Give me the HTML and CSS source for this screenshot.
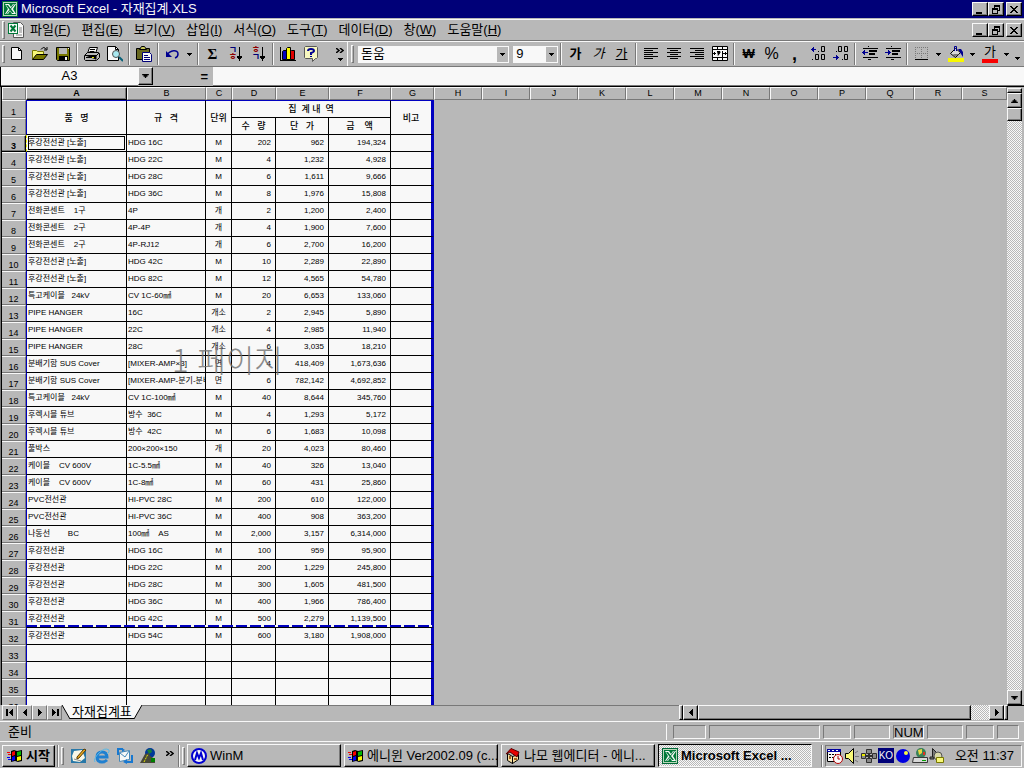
FILE: index.html
```html
<!DOCTYPE html>
<html lang="ko">
<head>
<meta charset="utf-8">
<title>Microsoft Excel - 자재집계.XLS</title>
<link rel="stylesheet" href="styles.css">
</head>
<body>
<svg class="defs" aria-hidden="true">
  <symbol id="xl" viewBox="0 0 16 16"><path fill="#006838" d="M0 0h16v16H0z"/><path fill="#b8d8b8" d="M1 1h14v14H1z"/><path fill="#007838" d="M2 2h12v12H2z"/><path fill="#f8f8f8" d="M3 3h4l2 3 2-3h3l-3 5 3 5h-4l-2-3-2 3H3l3-5z"/><path fill="#007838" d="M4 4h2l6 8h-2zM12 3h1l-8 10H4z"/></symbol>
  <symbol id="down" viewBox="0 0 5 3"><path d="M0 0h5v1H0zM1 1h3v1H1zM2 2h1v1H2z"/></symbol>
  <symbol id="left" viewBox="0 0 4 7"><path d="M3 0h1v7H3zM2 1h1v5H2zM1 2h1v3H1zM0 3h1v1H0z"/></symbol>
  <symbol id="right" viewBox="0 0 4 7"><path d="M0 0h1v7H0zM1 1h1v5H1zM2 2h1v3H2zM3 3h1v1H3z"/></symbol>
  <symbol id="min" viewBox="0 0 10 9"><path d="M1 7h6v2H1z"/></symbol>
  <symbol id="restore" viewBox="0 0 10 9"><path fill-rule="evenodd" d="M3 0h6v6H7V5h1V2H4v1H3zM1 3h6v6H1zM2 5v3h4V5z"/></symbol>
  <symbol id="close" viewBox="0 0 10 9"><path d="M1 1h2v1h1v1h2V2h1V1h2v1H8v1H7v1H6v1h1v1h1v1h1v1H7V7H6V6H4v1H3v1H1V7h1V6h1V5h1V4H3V3H2V2H1z"/></symbol>
  <symbol id="more" viewBox="0 0 8 5"><path fill="none" stroke="#000" stroke-width="1.500" d="M0 0l3 2.500L0 5M4 0l3 2.500L4 5"/></symbol>
  <symbol id="flag" viewBox="0 0 16 14"><path d="M4 2l3-1 3 1 5-1v11l-4 1-3-1-4 1z"/><path fill="#f80000" d="M5 3l3-1v4L5 7zM0 3h3v1H0zM1 5h3v1H1z"/><path fill="#00b800" d="M10 3l4-1v4l-4 1z"/><path fill="#0000f8" d="M5 8l3-1v4l-3 1zM0 8h3v1H0zM1 10h3v1H1z"/><path fill="#f8f800" d="M10 8l4-1v4l-4 1z"/></symbol>
</svg>

<header class="titlebar">
  <svg class="i16"><use href="#xl"/></svg>
  <h1 class="title">Microsoft Excel - 자재집계.XLS</h1>
  <div class="winbtns">
    <button class="wb" aria-label="최소화"><svg><use href="#min"/></svg></button>
    <button class="wb" aria-label="복원"><svg><use href="#restore"/></svg></button>
    <button class="wb wb-close" aria-label="닫기"><svg><use href="#close"/></svg></button>
  </div>
</header>

<nav class="menubar">
  <span class="grip"></span>
  <svg class="i16" viewBox="0 0 16 16"><path fill="#f8f8f8" stroke="#585858" d="M5.500 .5h7l3 3v12h-10z"/><path stroke="#888" d="M11 6h3M11 8h3M11 10h3M8 13h6"/><path fill="#007838" d="M0 1h10v11H0z"/><path fill="#f8f8f8" d="M1 2h8v9H1z"/><path stroke="#007838" stroke-width="2" d="M2.500 3.500l5 6M7.500 3.500l-5 6"/></svg>
  <div class="menus">
    <button>파일(<u>F</u>)</button><button>편집(<u>E</u>)</button><button>보기(<u>V</u>)</button><button>삽입(<u>I</u>)</button><button>서식(<u>O</u>)</button><button>도구(<u>T</u>)</button><button>데이터(<u>D</u>)</button><button>창(<u>W</u>)</button><button>도움말(<u>H</u>)</button>
  </div>
  <div class="winbtns">
    <button class="wb" aria-label="창 최소화"><svg><use href="#min"/></svg></button>
    <button class="wb" aria-label="창 복원"><svg><use href="#restore"/></svg></button>
    <button class="wb wb-close" aria-label="창 닫기"><svg><use href="#close"/></svg></button>
  </div>
</nav>

<div class="toolbars">
  <div class="toolbar">
    <span class="grip"></span>
    <button class="tb" aria-label="새로 만들기"><svg class="i16" viewBox="0 0 16 16"><path fill="#f8f8f8" stroke="#000" d="M2.500 1.500h7l3 3v9h-10z"/><path fill="none" stroke="#000" d="M9.500 1.500v3h3"/></svg></button>
    <button class="tb" aria-label="열기"><svg class="i16" viewBox="0 0 16 16"><path fill="#f8f878" stroke="#787800" d="M.5 13.500v-9h4l1 1h6v3"/><path fill="#787800" stroke="#000" d="M.5 13.500l4-5h11l-4 5z"/><path fill="none" stroke="#000" d="M9 3.500q3-4 5 0M15 1v3h-3"/></svg></button>
    <button class="tb" aria-label="저장"><svg class="i16" viewBox="0 0 16 16"><path fill="#787800" stroke="#000" d="M1.500 1.500h13v13h-12l-1-1z"/><path fill="#b8b8b8" d="M4 2h8v6H4z"/><path d="M4 10h9v4H4z"/><path fill="#f8f8f8" d="M10 11h2v3h-2zM13 2h1v1h-1z"/></svg></button>
    <span class="sep"></span>
    <button class="tb" aria-label="인쇄"><svg class="i16" viewBox="0 0 16 16"><path fill="#f8f8f8" stroke="#000" d="M5.500 1.500h8l-2 6h-8z"/><path stroke="#000" d="M6 3.500h5M5.500 5.500h5"/><path fill="#b8b8b8" stroke="#000" d="M.5 9.500l3-3h11l1 1v4l-3 3H1.500l-1-1z"/><path stroke="#000" d="M1 9.500h11v4M12 10l3-3M2 11.500h9"/><path fill="#e8e800" d="M8 11h2v1H8z"/></svg></button>
    <button class="tb" aria-label="미리 보기"><svg class="i16" viewBox="0 0 16 16"><path fill="#f8f8f8" stroke="#000" d="M.5 .5h8l3 3v11H.5z"/><path fill="none" stroke="#000" d="M8.500 .5v3h3"/><circle cx="9" cy="8" r="3.500" fill="#a8e8f0" stroke="#505050"/><path stroke="#086078" stroke-width="2" d="M12 11l4 4"/></svg></button>
    <span class="sep"></span>
    <button class="tb" aria-label="붙여넣기"><svg class="i16" viewBox="0 0 16 16"><path fill="#686820" stroke="#000" d="M.5 2.500h13v11H.5z"/><path fill="#c8c858" stroke="#000" d="M3.500 3.500l2-3h3l2 3z"/><path fill="#f8f8f8" stroke="#000078" d="M6.500 6.500h7l2 2v7h-9z"/><path stroke="#000078" d="M8 9.500h4M8 11.500h6M8 13.500h6"/></svg></button>
    <span class="sep"></span>
    <button class="tb" aria-label="실행 취소"><svg class="i16" viewBox="0 0 16 16"><path fill="none" stroke="#000090" stroke-width="1.500" d="M2 9C5 4 13 3 13 8q0 3-3 4"/><path fill="#000090" d="M1 5v6h6z"/></svg></button>
    <button class="dd" aria-label="실행 취소 목록"><svg class="arr"><use href="#down"/></svg></button>
    <span class="sep"></span>
    <button class="tb sigma" aria-label="자동 합계">Σ</button>
    <button class="tb" aria-label="오름차순"><span class="sort"><b class="navy">ㄱ</b><b class="red">ㅎ</b></span><svg class="sarrow" viewBox="0 0 5 14"><path d="M2 0h1v14H2zM0 9h5v1H0zM0 10h5v1H0zM1 11h3v1H1z"/></svg></button>
    <button class="tb" aria-label="내림차순"><span class="sort"><b class="red">ㅎ</b><b class="navy">ㄱ</b></span><svg class="sarrow" viewBox="0 0 5 14"><path d="M2 0h1v14H2zM0 9h5v1H0zM0 10h5v1H0zM1 11h3v1H1z"/></svg></button>
    <span class="sep"></span>
    <button class="tb" aria-label="차트"><svg class="i16" viewBox="0 0 16 16"><path d="M0 1h1v13h15v1H0z"/><path fill="#0000c0" stroke="#000" d="M2.500 5.500l1-1h3v9h-4z"/><path fill="#f8f800" stroke="#000" d="M6.500 2.500l1-1h3v12h-4z"/><path fill="#e00000" stroke="#000" d="M10.500 5.500l1-1h3v9h-4z"/></svg></button>
    <button class="tb" aria-label="도움말"><svg class="i16" viewBox="0 0 16 16"><path fill="#f8f8c0" stroke="#585858" d="M2.500 .5h11l1 1v10l-1 1h-1l-3 3v-3h-7l-1-1v-10z"/><path fill="none" stroke="#000090" stroke-width="2" d="M5 5q0-2 3-2t3 2q0 1-3 2v2M8 10v1"/></svg></button>
    <button class="overflow" aria-label="추가 단추"><svg class="morei"><use href="#more"/></svg><svg class="arr"><use href="#down"/></svg></button>
  </div>
  <div class="toolbar format">
    <span class="grip"></span>
    <div class="combo font"><select aria-label="글꼴"><option>돋움</option></select><span class="comboarr"><svg class="arr"><use href="#down"/></svg></span></div>
    <div class="combo size"><select aria-label="글꼴 크기"><option>9</option></select><span class="comboarr"><svg class="arr"><use href="#down"/></svg></span></div>
    <span class="sep"></span>
    <button class="tb"><b>가</b></button><button class="tb"><i>가</i></button><button class="tb"><u>가</u></button>
    <span class="sep"></span>
    <button class="tb" aria-label="왼쪽 맞춤"><svg class="i16" viewBox="0 0 16 16"><path d="M1 2h14v1H1zM1 4h9v1H1zM1 6h14v1H1zM1 8h9v1H1zM1 10h14v1H1zM1 12h9v1H1z"/></svg></button>
    <button class="tb" aria-label="가운데 맞춤"><svg class="i16" viewBox="0 0 16 16"><path d="M1 2h14v1H1zM4 4h8v1H4zM1 6h14v1H1zM4 8h8v1H4zM1 10h14v1H1zM4 12h8v1H4z"/></svg></button>
    <button class="tb" aria-label="오른쪽 맞춤"><svg class="i16" viewBox="0 0 16 16"><path d="M1 2h14v1H1zM6 4h9v1H6zM1 6h14v1H1zM6 8h9v1H6zM1 10h14v1H1zM6 12h9v1H6z"/></svg></button>
    <button class="tb" aria-label="병합하고 가운데 맞춤"><svg class="i16" viewBox="0 0 16 16"><path fill="#f8f8f8" stroke="#000" d="M.5 .5h15v14H.5z"/><path stroke="#000" d="M0 3.500h16M0 11.500h16M5.500 0v3M10.500 0v3M5.500 12v3M10.500 12v3M5 5.500h3v1l-2 3M10.500 5v6M10 7.500h2M2 7.500h2M12 7.500h2"/><path d="M1 7h1v1H1zM2 6h1v3H2zM14 7h1v1h-1zM13 6h1v3h-1z"/></svg></button>
    <span class="sep"></span>
    <button class="tb bold">₩</button><button class="tb pct">%</button><button class="tb comma">,</button>
    <button class="tb" aria-label="자릿수 늘림"><svg class="i16" viewBox="0 0 16 16"><path fill="#000090" d="M1 3h5v1H1zM2 2h1v3H2zM3 1h1v5H3z"/><path fill="none" stroke="#000" d="M8 5.500h1M11.500 .5h3v5h-3zM2 13.500h1M5.500 8.500h3v5h-3zM11.500 8.500h3v5h-3z"/></svg></button>
    <button class="tb" aria-label="자릿수 줄임"><svg class="i16" viewBox="0 0 16 16"><path fill="none" stroke="#000" d="M3 5.500h1M5.500 .5h3v5h-3zM11.500 .5h3v5h-3zM9 13.500h1M11.500 8.500h3v5h-3z"/><path fill="#000090" d="M0 11h6v1H0zM4 10h1v3H4zM3 9h1v5H3z"/></svg></button>
    <span class="sep"></span>
    <button class="tb" aria-label="내어쓰기"><svg class="i16" viewBox="0 0 16 16"><path d="M1 2h15v1H1zM7 4h8v2H7zM7 7h6v2H7zM1 11h15v1H1zM6 13h3v1H6zM6 0h1v1H6z"/><path fill="#000090" d="M0 6h6v1H0zM1 5h1v3H1zM2 4h1v5H2z"/></svg></button>
    <button class="tb" aria-label="들여쓰기"><svg class="i16" viewBox="0 0 16 16"><path d="M1 2h15v1H1zM7 4h8v2H7zM7 7h6v2H7zM1 11h15v1H1zM6 13h3v1H6zM6 0h1v1H6z"/><path fill="#000090" d="M0 6h6v1H0zM4 5h1v3H4zM3 4h1v5H3z"/></svg></button>
    <span class="sep"></span>
    <button class="tb" aria-label="테두리"><svg class="i16" viewBox="0 0 16 16"><path fill="none" stroke="#787878" stroke-dasharray="1 1" d="M1.500 1v13M7.500 1v13M13.500 1v13M1 1.500h13M1 7.500h13"/><path d="M1 13h13v1H1z"/></svg></button>
    <button class="dd" aria-label="테두리 목록"><svg class="arr"><use href="#down"/></svg></button>
    <button class="tb" aria-label="채우기 색"><svg class="i16" viewBox="0 0 16 16"><path fill="#d8d8d8" stroke="#000" d="M2.500 7.500l5-5 5 4-5 5z"/><path fill="#787878" d="M5 8h6l-4 3z"/><path fill="none" stroke="#000090" d="M6.500 5V.5h2V5"/><path fill="#000090" d="M10 3h3l2 3v5l-2-3z"/><path fill="#f8f800" d="M0 12h16v4H0z"/></svg></button>
    <button class="dd" aria-label="채우기 색 목록"><svg class="arr"><use href="#down"/></svg></button>
    <button class="tb fontcolor">가</button>
    <button class="dd" aria-label="글꼴 색 목록"><svg class="arr"><use href="#down"/></svg></button>
    <button class="overflow end" aria-label="추가 서식"><svg class="arr"><use href="#down"/></svg></button>
  </div>
</div>

<div class="formula">
  <input class="namebox" aria-label="이름 상자" value="A3">
  <button class="raised namearr" aria-label="이름 목록"><svg class="arr big"><use href="#down"/></svg></button>
  <button class="equals">=</button>
  <input class="fx" aria-label="수식 입력줄">
</div>

<main class="work">
  <div class="sheet">
    <table class="grid">
      <colgroup><col class="c0"><col class="cA"><col class="cB"><col class="cC"><col class="cD"><col class="cE"><col class="cF"><col class="cG"><col span="11" class="cH"><col></colgroup>
      <thead><tr><th></th><th class="cur">A</th><th>B</th><th>C</th><th>D</th><th>E</th><th>F</th><th>G</th><th>H</th><th>I</th><th>J</th><th>K</th><th>L</th><th>M</th><th>N</th><th>O</th><th>P</th><th>Q</th><th>R</th><th>S</th></tr></thead>
      <tbody>
        <tr class="head first"><th>1</th><td rowspan="2">품&nbsp;&nbsp;&nbsp;명</td><td rowspan="2">규&nbsp;&nbsp;&nbsp;격</td><td rowspan="2">단위</td><td colspan="3">집&nbsp; 계 내&nbsp; 역</td><td rowspan="2" class="last">비고</td></tr>
        <tr class="head"><th>2</th><td>수&nbsp;&nbsp;&nbsp;량</td><td>단&nbsp;&nbsp;&nbsp;가</td><td class="amt">금&nbsp;&nbsp;&nbsp;&nbsp;액</td></tr>
        <tr><th class="cur">3</th><td class="active">후강전선관 [노출]</td><td>HDG 16C</td><td>M</td><td>202</td><td>962</td><td>194,324</td><td></td></tr>
        <tr><th>4</th><td>후강전선관 [노출]</td><td>HDG 22C</td><td>M</td><td>4</td><td>1,232</td><td>4,928</td><td></td></tr>
        <tr><th>5</th><td>후강전선관 [노출]</td><td>HDG 28C</td><td>M</td><td>6</td><td>1,611</td><td>9,666</td><td></td></tr>
        <tr><th>6</th><td>후강전선관 [노출]</td><td>HDG 36C</td><td>M</td><td>8</td><td>1,976</td><td>15,808</td><td></td></tr>
        <tr><th>7</th><td>전화콘센트 &nbsp; &nbsp;1구</td><td>4P</td><td>개</td><td>2</td><td>1,200</td><td>2,400</td><td></td></tr>
        <tr><th>8</th><td>전화콘센트 &nbsp; &nbsp;2구</td><td>4P-4P</td><td>개</td><td>4</td><td>1,900</td><td>7,600</td><td></td></tr>
        <tr><th>9</th><td>전화콘센트 &nbsp; &nbsp;2구</td><td>4P-RJ12</td><td>개</td><td>6</td><td>2,700</td><td>16,200</td><td></td></tr>
        <tr><th>10</th><td>후강전선관 [노출]</td><td>HDG 42C</td><td>M</td><td>10</td><td>2,289</td><td>22,890</td><td></td></tr>
        <tr><th>11</th><td>후강전선관 [노출]</td><td>HDG 82C</td><td>M</td><td>12</td><td>4,565</td><td>54,780</td><td></td></tr>
        <tr><th>12</th><td>특고케이블 &nbsp; 24kV</td><td>CV 1C-60㎟</td><td>M</td><td>20</td><td>6,653</td><td>133,060</td><td></td></tr>
        <tr><th>13</th><td>PIPE HANGER</td><td>16C</td><td>개소</td><td>2</td><td>2,945</td><td>5,890</td><td></td></tr>
        <tr><th>14</th><td>PIPE HANGER</td><td>22C</td><td>개소</td><td>4</td><td>2,985</td><td>11,940</td><td></td></tr>
        <tr><th>15</th><td>PIPE HANGER</td><td>28C</td><td>개소</td><td>6</td><td>3,035</td><td>18,210</td><td></td></tr>
        <tr><th>16</th><td>분배기함 SUS Cover</td><td>[MIXER-AMP×3]</td><td>면</td><td>4</td><td>418,409</td><td>1,673,636</td><td></td></tr>
        <tr><th>17</th><td>분배기함 SUS Cover</td><td>[MIXER-AMP-분기-분배]</td><td>면</td><td>6</td><td>782,142</td><td>4,692,852</td><td></td></tr>
        <tr><th>18</th><td>특고케이블 &nbsp; 24kV</td><td>CV 1C-100㎟</td><td>M</td><td>40</td><td>8,644</td><td>345,760</td><td></td></tr>
        <tr><th>19</th><td>후렉시블 튜브</td><td>방수 &nbsp;36C</td><td>M</td><td>4</td><td>1,293</td><td>5,172</td><td></td></tr>
        <tr><th>20</th><td>후렉시블 튜브</td><td>방수 &nbsp;42C</td><td>M</td><td>6</td><td>1,683</td><td>10,098</td><td></td></tr>
        <tr><th>21</th><td>풀박스</td><td>200×200×150</td><td>개</td><td>20</td><td>4,023</td><td>80,460</td><td></td></tr>
        <tr><th>22</th><td>케이블 &nbsp; &nbsp;CV 600V</td><td>1C-5.5㎟</td><td>M</td><td>40</td><td>326</td><td>13,040</td><td></td></tr>
        <tr><th>23</th><td>케이블 &nbsp; &nbsp;CV 600V</td><td>1C-8㎟</td><td>M</td><td>60</td><td>431</td><td>25,860</td><td></td></tr>
        <tr><th>24</th><td>PVC전선관</td><td>HI-PVC 28C</td><td>M</td><td>200</td><td>610</td><td>122,000</td><td></td></tr>
        <tr><th>25</th><td>PVC전선관</td><td>HI-PVC 36C</td><td>M</td><td>400</td><td>908</td><td>363,200</td><td></td></tr>
        <tr><th>26</th><td>나동선 &nbsp; &nbsp; &nbsp; &nbsp;BC</td><td>100㎟ &nbsp; &nbsp;AS</td><td>M</td><td>2,000</td><td>3,157</td><td>6,314,000</td><td></td></tr>
        <tr><th>27</th><td>후강전선관</td><td>HDG 16C</td><td>M</td><td>100</td><td>959</td><td>95,900</td><td></td></tr>
        <tr><th>28</th><td>후강전선관</td><td>HDG 22C</td><td>M</td><td>200</td><td>1,229</td><td>245,800</td><td></td></tr>
        <tr><th>29</th><td>후강전선관</td><td>HDG 28C</td><td>M</td><td>300</td><td>1,605</td><td>481,500</td><td></td></tr>
        <tr><th>30</th><td>후강전선관</td><td>HDG 36C</td><td>M</td><td>400</td><td>1,966</td><td>786,400</td><td></td></tr>
        <tr><th>31</th><td>후강전선관</td><td>HDG 42C</td><td>M</td><td>500</td><td>2,279</td><td>1,139,500</td><td></td></tr>
        <tr><th>32</th><td>후강전선관</td><td>HDG 54C</td><td>M</td><td>600</td><td>3,180</td><td>1,908,000</td><td></td></tr>
        <tr><th>33</th><td></td><td></td><td></td><td></td><td></td><td></td><td></td></tr>
        <tr><th>34</th><td></td><td></td><td></td><td></td><td></td><td></td><td></td></tr>
        <tr><th>35</th><td></td><td></td><td></td><td></td><td></td><td></td><td></td></tr>
        <tr><th>36</th><td></td><td></td><td></td><td></td><td></td><td></td><td></td></tr>
      </tbody>
    </table>
    <div class="pagebreak"></div>
    <div class="watermark">1 페이지</div>
  </div>
  <div class="vscroll">
    <span class="raised split"></span>
    <button class="raised sb" aria-label="위로"><svg class="up"><use href="#down"/></svg></button>
    <span class="raised vthumb"></span>
    <span class="dither track"></span>
    <button class="raised sb" aria-label="아래로"><svg class="arr big"><use href="#down"/></svg></button>
  </div>
</main>

<div class="tabs">
  <div class="tabnav">
    <button aria-label="첫 시트"><svg viewBox="0 0 8 7"><path d="M0 0h2v7H0z"/><use href="#left" x="3" width="4" height="7"/></svg></button>
    <button aria-label="이전 시트"><svg viewBox="0 0 8 7"><use href="#left" x="2" width="4" height="7"/></svg></button>
    <button aria-label="다음 시트"><svg viewBox="0 0 8 7"><use href="#right" x="2" width="4" height="7"/></svg></button>
    <button aria-label="마지막 시트"><svg viewBox="0 0 8 7"><use href="#right" x="1" width="4" height="7"/><path d="M6 0h2v7H6z"/></svg></button>
  </div>
  <button class="tab"><svg viewBox="0 0 8 14"><path fill="#f8f8f8" d="M0 0h8v14z"/><path stroke="#000" d="M0 0l8 14"/></svg><span>자재집계표</span><svg viewBox="0 0 8 14"><path fill="#f8f8f8" d="M8 0H0v14z"/><path stroke="#000" d="M8 0L0 14"/></svg></button>
  <div class="tabfill"></div>
  <div class="hscroll">
    <span class="raised hsplit"></span>
    <button class="raised sb" aria-label="왼쪽으로"><svg class="hz"><use href="#left"/></svg></button>
    <span class="raised hthumb"></span>
    <span class="dither htrack"></span>
    <button class="raised sb" aria-label="오른쪽으로"><svg class="hz"><use href="#right"/></svg></button>
    <span class="raised hsplit"></span>
  </div>
  <span class="corner"></span>
</div>

<footer class="status">
  <span class="ready">준비</span>
  <span class="pane w33"></span><span class="pane w111"></span><span class="pane w28"></span><span class="pane w36"></span><span class="pane w31">NUM</span><span class="pane w36"></span><span class="pane w28"></span><span class="pane w22"></span>
</footer>

<div class="taskbar">
  <button class="raised start"><svg class="flag"><use href="#flag"/></svg><b>시작</b></button>
  <span class="bar"></span><span class="grip"></span>
  <div class="quick">
    <button aria-label="바탕 화면 보기"><svg class="i16" viewBox="0 0 16 16"><path fill="#2878a8" d="M0 1h15v14H0z"/><path fill="#f8f8e8" d="M3 3l8-1 3 8-5 4-7-1-1-5z"/><path fill="#e8a820" stroke="#583800" d="M13 1l2 1-7 8-2 1v-2z"/><path stroke="#888" d="M3 11l7 2"/></svg></button>
    <button aria-label="Internet Explorer"><svg class="i16" viewBox="0 0 16 16"><path fill="none" stroke="#2080d0" stroke-width="3" d="M4 9h9q0-5-5-5t-5 5 5 5q3 0 5-2"/><path fill="none" stroke="#58b8e8" d="M1 14Q-1 11 5 5T15 2q1 2-2 4"/></svg></button>
    <button aria-label="Outlook Express"><svg class="i16" viewBox="0 0 16 16"><path fill="#f8f8f8" stroke="#4888b8" d="M2.500 4.500l10-2v9l-10 2z"/><path fill="none" stroke="#4888b8" d="M3 5l5 4 4-6"/><path fill="none" stroke="#1878d0" stroke-width="2" d="M1 7V1h5M15 7v7H9"/><path fill="#1878d0" d="M5 0l3 2-3 2zM10 11v5l-4-2z"/></svg></button>
    <button aria-label="채널 보기"><svg class="i16" viewBox="0 0 16 16"><circle cx="10" cy="5" r="5" fill="#003898"/><path fill="#188038" d="M7 2l4-1 1 3-3 2z"/><path fill="#484838" d="M0 15l5-9 4-1 1 3 5 3v4z"/><path stroke="#e8e800" stroke-dasharray="2 1" d="M4 14l4-8"/><path fill="#008000" d="M11 10h4v4h-4z"/></svg></button>
    <button class="qmore" aria-label="더 보기"><svg class="morei"><use href="#more"/></svg></button>
  </div>
  <span class="bar"></span><span class="grip"></span>
  <div class="tasks">
    <button class="raised task"><svg class="i16" viewBox="0 0 16 16"><circle cx="8" cy="8" r="7" fill="#f8f8f8" stroke="#0000d0" stroke-width="2"/><path fill="none" stroke="#0000d0" stroke-width="2" d="M4 12l2-7 2 5 2-5 2 7"/></svg><span>WinM</span></button>
    <button class="raised task"><svg class="flag"><use href="#flag"/></svg><span>에니윈 Ver2002.09 (c...</span></button>
    <button class="raised task"><svg class="i16" viewBox="0 0 16 16"><path fill="#f8e0a0" stroke="#000" d="M2.500 5.500l5 3v7l-5-3zM7.500 8.500l6-2v5l-6 4z"/><path fill="#e80000" stroke="#580000" d="M6 .5L14 4l-2 5-7-5-4 2z"/><path fill="#a86020" d="M4 8h2v3H4zM9 10h3v2H9z"/></svg><span>나모 웹에디터 - 에니...</span></button>
    <button class="task pressed dither"><svg class="i16"><use href="#xl"/></svg><b>Microsoft Excel ...</b></button>
  </div>
  <span class="bar traybar"></span>
  <div class="tray">
    <svg class="i16" viewBox="0 0 16 16"><path fill="#f8f8f8" stroke="#000" d="M.5 1.500h13v12H.5z"/><path fill="#0000a0" d="M0 1h14v3H0z"/><path stroke="#f8f8f8" stroke-dasharray="2 2" d="M1 2.500h12"/><path stroke="#000" stroke-dasharray="2 1" d="M2 6.500h7M2 9.500h5"/><circle cx="11" cy="11" r="4.500" fill="#f8f8f8" stroke="#b80000"/><path fill="none" stroke="#b80000" d="M11 8v3h2"/></svg>
    <svg class="i16" viewBox="0 0 16 16"><path fill="#f8f878" stroke="#000" d="M1.500 5.500h3l5-5v15l-5-5h-3z"/><path stroke="#787878" d="M11 8.500h4M11 5l3-2M11 12l3 2"/></svg>
    <svg class="i16" viewBox="0 0 16 16"><path fill="#888" stroke="#303030" d="M5.500 1.500h5v4h-5zM.5 5.500h4v5h-4zM11.500 5.500h4v5h-4zM5.500 10.500h5v4h-5z"/><path stroke="#303030" stroke-width="2" d="M8 5v6M4 8h8"/><path fill="#e8e800" d="M1 6h3v2H1z"/></svg>
    <span class="ime">KO</span>
    <svg class="i16" viewBox="0 0 16 16"><circle cx="8" cy="8" r="7" fill="#0000e0"/><circle cx="11" cy="5" r="2" fill="#f8f840"/></svg>
    <svg class="i16" viewBox="0 0 16 16"><circle cx="9" cy="5" r="5" fill="#388058"/><path fill="#e8d840" d="M6 2l4-1v4L7 7z"/><path fill="#e03020" d="M11 4h2v3h-2z"/><path fill="#d8d8d8" stroke="#383838" d="M1.500 9.500h14v5H.5z"/><path fill="#00a000" d="M10 12h4v1h-4z"/></svg>
    <svg class="i16" viewBox="0 0 16 16"><path fill="#787878" stroke="#202020" d="M3.500 9V.5l4 4M1 9h4v2H1z"/><circle cx="9" cy="8" r="4" fill="#d8d8a8" stroke="#505050"/><path fill="#f8f878" stroke="#787800" d="M7.500 9.500h7v5h-7z"/></svg>
    <time class="clock">오전 11:37</time>
  </div>
</div>
</body>
</html>
```

FILE: styles.css
```css
:root {
  --face: #b8b8b8;
  --light: #f8f8f8;
  --shade: #787878;
  --navy: #000078;
  --blue: #0000c0;
}
* { box-sizing: border-box; }
body {
  margin: 0;
  height: 100vh;
  display: flex;
  flex-direction: column;
  overflow: hidden;
  background: var(--face);
  color: #000;
  font: 13px/16px "Liberation Sans", "Noto Sans CJK KR", sans-serif;
}
button, input, select {
  font: inherit;
  color: inherit;
  border: 0;
  border-radius: 0;
  padding: 0;
  margin: 0;
  background: transparent;
}
button { display: flex; align-items: center; justify-content: center; white-space: nowrap; }
svg { display: block; flex: none; }
.defs { position: absolute; width: 0; height: 0; }
.i16 { width: 16px; height: 16px; }
.flag { width: 16px; height: 14px; }
.arr { width: 5px; height: 3px; }
.big, .up { width: 7px; height: 4px; }
.up { transform: rotate(180deg); }
.hz { width: 4px; height: 7px; }
.morei { width: 8px; height: 5px; }
.raised {
  background: var(--face);
  border: 1px solid #000;
  border-top-color: var(--light);
  border-left-color: var(--light);
  box-shadow: inset -1px -1px var(--shade);
}
.dither { background: repeating-conic-gradient(var(--light) 0 25%, var(--face) 0 50%) 0 0 / 2px 2px; }
.grip {
  width: 3px;
  height: 18px;
  flex: none;
  border: 1px solid var(--shade);
  border-top-color: var(--light);
  border-left-color: var(--light);
}

/* title and menu */
.titlebar {
  display: flex;
  align-items: center;
  height: 18px;
  padding: 0 2px;
  gap: 3px;
  background: var(--navy);
  color: var(--light);
}
.title { margin: 0; flex: 1; font: inherit; }
.winbtns { display: flex; }
.wb {
  width: 16px;
  height: 14px;
  color: #000;
  background: var(--face);
  border: 1px solid #000;
  border-top-color: var(--light);
  border-left-color: var(--light);
  box-shadow: inset -1px -1px var(--shade);
}
.wb svg { width: 10px; height: 9px; }
.wb-close { margin-left: 2px; }
.menubar {
  display: flex;
  align-items: center;
  height: 22px;
  margin-top: 1px;
  padding: 0 2px;
  gap: 3px;
  border-top: 1px solid var(--light);
  border-bottom: 1px solid var(--shade);
}
.menus { display: flex; gap: 11px; flex: 1; padding-left: 3px; }

/* toolbars */
.toolbars { display: flex; height: 26px; border-top: 1px solid var(--light); border-bottom: 1px solid var(--shade); }
.toolbar { display: flex; align-items: center; padding-left: 2px; width: 347px; }
.toolbar.format { flex: 1; border-left: 1px solid var(--light); padding-left: 3px; }
.tb { width: 23px; height: 22px; flex: none; }
.dd { width: 11px; height: 22px; flex: none; }
.sep { width: 2px; height: 22px; margin: 0 2px; flex: none; border-left: 1px solid var(--shade); border-right: 1px solid var(--light); }
.sigma { font: bold 15px/16px "Liberation Serif", serif; }
.sort { display: flex; flex-direction: column; font-size: 9px; line-height: 7px; }
.sarrow { width: 5px; height: 14px; }
.navy { color: var(--navy); }
.red { color: #900000; }
.overflow { flex-direction: column; gap: 5px; width: 10px; margin-left: auto; margin-right: 2px; }
.overflow.end { padding-top: 8px; }
.combo { display: grid; grid-template-columns: 1fr 11px; height: 17px; background: var(--light); border: 1px solid var(--light); margin-left: 4px; }
.combo select { grid-area: 1 / 1 / 2 / 3; appearance: none; padding-left: 2px; width: 100%; height: 15px; line-height: 14px; }
.comboarr { grid-area: 1 / 2; display: flex; align-items: center; justify-content: center; background: var(--face); pointer-events: none; }
.combo.font { width: 152px; }
.combo.size { width: 45px; }
.bold { font-weight: bold; }
.pct { font-size: 16px; }
.comma { font-weight: bold; font-size: 18px; }
.fontcolor { width: 16px; height: 17px; margin: 0 3px 0 4px; line-height: 12px; border-bottom: 4px solid #f80000; }

/* formula bar */
.formula { display: flex; height: 20px; border-bottom: 1px solid #000; border-left: 1px solid #000; }
.namebox { width: 137px; background: var(--light); text-align: center; }
.namearr { width: 15px; height: 18px; }
.equals { width: 60px; padding-right: 5px; justify-content: flex-end; font-weight: bold; }
.fx { flex: 1; min-width: 0; background: var(--light); border-bottom: 1px solid var(--shade); }
.namebox { border-bottom: 1px solid var(--shade); }

/* worksheet */
.work { flex: 1; min-height: 0; display: flex; border-left: 1px solid var(--shade); }
.sheet { flex: 1; min-width: 0; position: relative; overflow: hidden; border-left: 1px solid #000; }
.grid { width: 100%; table-layout: fixed; border-collapse: separate; border-spacing: 0; font-size: 8px; line-height: 16px; }
.c0 { width: 24px; } .cA { width: 101px; } .cB { width: 79px; } .cC { width: 26px; }
.cD { width: 44px; } .cE { width: 53px; } .cF { width: 62px; } .cG { width: 43px; } .cH { width: 48px; }
.grid th {
  padding: 0;
  font-size: 9px;
  font-weight: normal;
  background: var(--face);
  border: 1px solid var(--shade);
  border-top-color: var(--light);
}
.grid thead th { line-height: 11px; border-left-color: var(--light); }
.grid tbody th { padding-top: 5px; line-height: 10px; border-left: 0; }
.grid th.cur { font-weight: bold; box-shadow: inset -1px -1px var(--shade); border-right-color: #000; border-bottom-color: #000; }
.grid td {
  height: 17px;
  padding: 0 4px 0 1px;
  overflow: hidden;
  white-space: nowrap;
  background: var(--light);
  border-right: 1px solid #000;
  border-bottom: 1px solid #000;
  text-align: right;
}
.grid td:nth-child(2), .grid td:nth-child(3) { text-align: left; padding-right: 0; }
.grid td:nth-child(2) { border-left: 1px solid var(--blue); }
.grid td:nth-child(4) { text-align: center; padding: 0; }
.grid td:nth-child(8), .grid td.last { border-right: 3px solid var(--blue); }
.grid .head td { text-align: center; padding: 0; font-size: 9px; font-weight: 500; }
.grid .first td { border-top: 1px solid var(--blue); }
.grid .head:not(.first) td:nth-child(2) { border-left: 0; }
.grid td.active { border-left: 1px dashed #f8f800; box-shadow: inset 0 0 0 1px var(--light), inset 0 0 0 2px #000; }
.pagebreak {
  position: absolute;
  top: 538px;
  left: 24px;
  width: 408px;
  height: 2px;
  background: repeating-linear-gradient(90deg, var(--blue) 0 11px, var(--light) 11px 14px);
}
.watermark {
  position: absolute;
  top: 255px;
  left: 170px;
  font: 300 31px/34px "Noto Sans CJK KR", sans-serif;
  color: #707070;
  opacity: .8;
}
.vscroll { width: 17px; display: flex; flex-direction: column; padding: 1px 2px 0 0; }
.split { height: 5px; }
.sb { width: 15px; height: 15px; flex: none; }
.vthumb { height: 13px; }
.track { flex: 1; }

/* sheet tabs */
.tabs { display: flex; height: 16px; padding-left: 2px; }
.tabnav { display: flex; }
.tabnav button { width: 15px; height: 15px; border: 1px solid var(--shade); border-top-color: var(--light); border-left-color: var(--light); }
.tabnav svg { width: 8px; height: 7px; }
.tab { height: 14px; }
.tab svg { width: 8px; height: 14px; }
.tab span { background: var(--light); line-height: 13px; border-bottom: 1px solid #000; padding: 0 2px; }
.tabfill { flex: 1; border-top: 1px solid var(--shade); }
.hscroll { display: flex; width: 329px; height: 15px; }
.hsplit { width: 4px; }
.hthumb { flex: 1; }
.htrack { width: 18px; }
.corner { width: 16px; border-top: 1px solid #000; }

/* status bar */
.status { display: flex; align-items: center; gap: 3px; height: 20px; padding: 0 5px 0 8px; border-top: 1px solid var(--light); }
.ready { flex: 1; border-right: 1px solid var(--light); margin-right: 3px; }
.pane { height: 14px; line-height: 13px; border: 1px solid var(--light); border-top-color: var(--shade); border-left-color: var(--shade); }
.w22 { width: 22px; } .w28 { width: 28px; } .w31 { width: 31px; } .w33 { width: 33px; } .w36 { width: 36px; } .w111 { width: 111px; }

/* taskbar */
.taskbar { display: flex; align-items: center; height: 27px; padding: 1px 2px 0; border-top: 1px solid var(--light); }
.start { width: 53px; height: 22px; gap: 3px; }
.bar { width: 2px; height: 22px; margin: 0 2px; border-left: 1px solid var(--shade); border-right: 1px solid var(--light); }
.quick { display: flex; align-items: center; gap: 7px; padding: 0 0 0 7px; }
.qmore { width: 13px; height: 16px; align-items: flex-start; padding-top: 3px; }
.tasks { display: flex; flex: 1; gap: 3px; padding-left: 2px; }
.task { flex: 1; min-width: 0; max-width: 154px; height: 23px; padding: 0 0 0 3px; gap: 3px; justify-content: flex-start; overflow: hidden; }
.pressed { border: 1px solid var(--light); border-top-color: #000; border-left-color: #000; }
.traybar { margin: 0 2px 0 8px; }
.tray { display: flex; align-items: center; gap: 1px; height: 22px; padding: 0 7px 0 1px; border: 1px solid var(--light); border-top-color: var(--shade); border-left-color: var(--shade); }
.ime { width: 16px; line-height: 15px; font-size: 10px; text-align: center; background: var(--navy); color: var(--light); }
.clock { padding-left: 9px; }
```
